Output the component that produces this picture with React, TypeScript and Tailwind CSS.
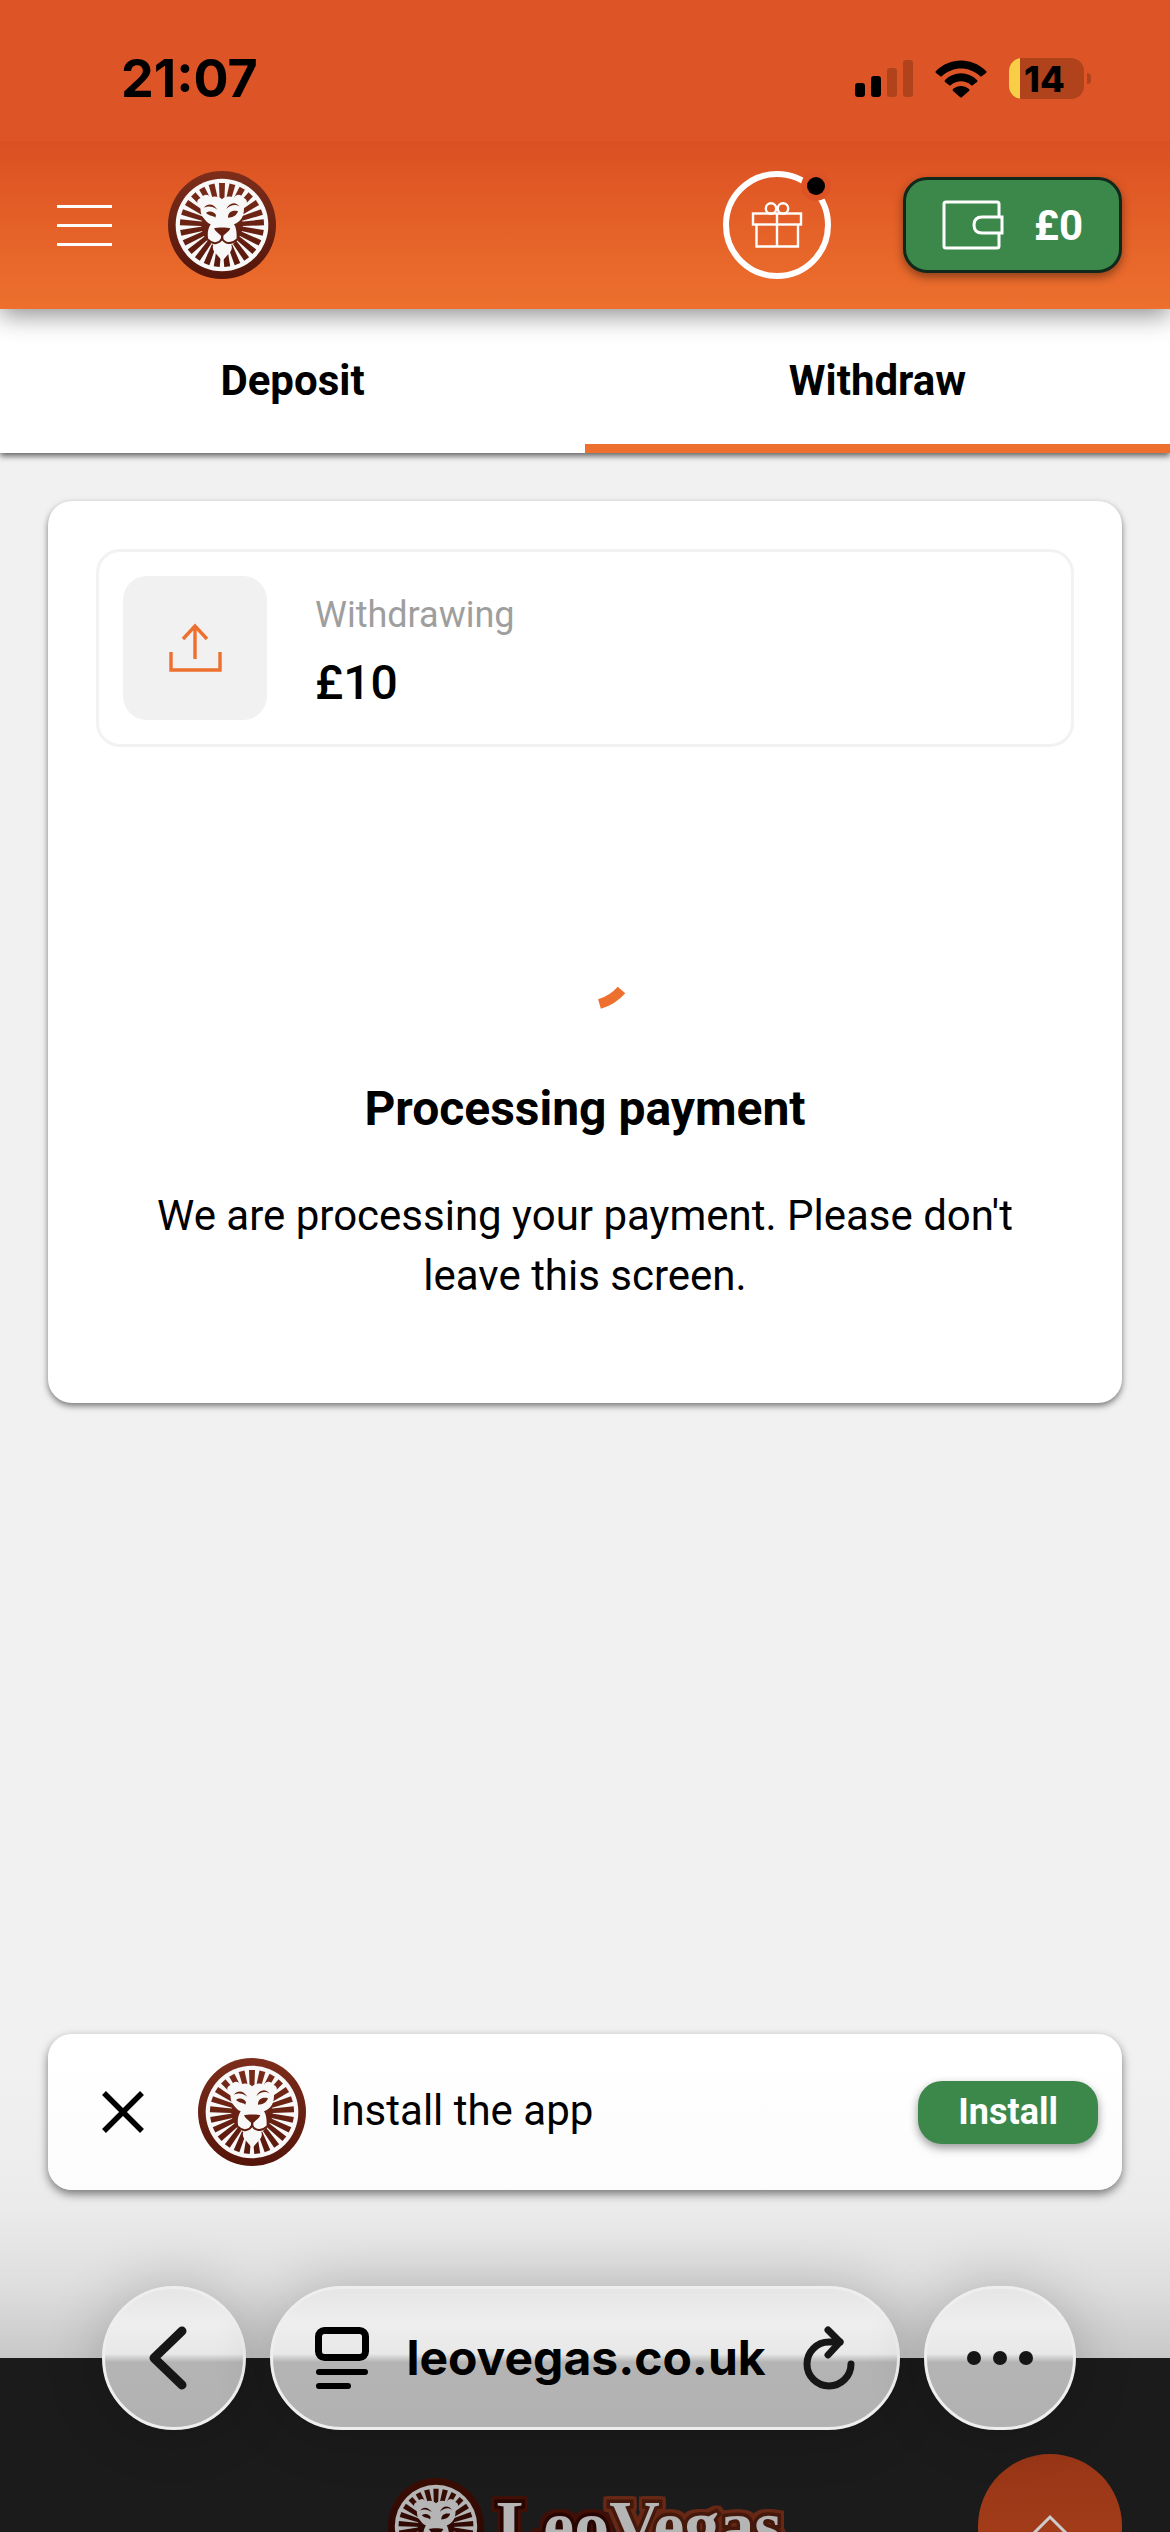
import { useId } from 'react';

const RAY_COUNT = 25;

interface LionLogoProps {
  className?: string;
  top?: string;
  bottom?: string;
  face?: string;
}

function LionLogo({
  className,
  top = '#7d2e1b',
  bottom = '#54150a',
  face = '#f8f8f8'
}: LionLogoProps) {
  const id = useId();
  const fill = `url(#${id})`;

  return (
    <svg viewBox="0 0 324 324" className={className} aria-hidden="true">
      <defs>
        <linearGradient id={id} gradientUnits="userSpaceOnUse" x1="0" y1="0" x2="0" y2="324">
          <stop offset="0" stopColor={top} />
          <stop offset="1" stopColor={bottom} />
        </linearGradient>
        <mask id={`${id}-rays`}>
          {Array.from({ length: RAY_COUNT }, (_, i) => (
            <path
              key={i}
              d="M-9 -126 H9 L6 -40 H-6 Z"
              fill="white"
              transform={`translate(162 162) rotate(${(360 / RAY_COUNT) * i})`}
            />
          ))}
          <circle cx="162" cy="164" r="62" fill="white" />
        </mask>
      </defs>
      <circle cx="162" cy="162" r="162" fill={fill} />
      <circle cx="162" cy="162" r="139" fill={face} />
      <rect width="324" height="324" fill={fill} mask={`url(#${id}-rays)`} />
      <g transform="translate(-24 -18)">
        <path
          fill={face}
          d="M186 103 C178 94 162 92 152 98 C146 86 130 86 126 98 C110 100 106 116 121 124 C122 140 122 150 130 158 C138 168 142 174 152 178 C144 190 142 205 144 218 C148 232 156 238 160 240 C156 250 160 258 168 266 L187 288 L206 266 C214 258 218 250 214 240 C222 236 230 228 230 214 C230 200 228 186 222 178 C232 174 240 168 246 158 C252 148 252 134 252 124 C266 116 262 100 248 98 C244 86 228 86 222 98 C210 92 194 94 186 103 Z"
        />
        <g fill={fill}>
          <path d="M162 190 C170 187 202 187 211 190 C208 199 196 206 190 212 V222 H183 V212 C176 206 166 199 162 190 Z" />
          <path d="M138 144 C148 136 162 139 168 150 L166 158 C162 152 148 154 138 144 Z" />
          <path d="M204 158 C203 142 218 134 234 139 C230 152 218 158 204 158 Z" />
          <path d="M132 128 C142 114 160 114 172 134 C158 124 146 122 132 128 Z" />
          <path d="M199 132 C208 112 228 108 240 126 C228 116 212 120 199 132 Z" />
        </g>
        <path
          fill="none"
          stroke={fill}
          strokeWidth="6"
          d="M144 224 C160 242 180 234 186 220 C194 236 214 240 230 224"
        />
      </g>
    </svg>
  );
}

function StatusBar() {
  return (
    <div className="flex h-[141px] items-center justify-between bg-[#dd5426] pt-4 pr-[79px] pl-[121px] text-black">
      <time className="font-['Inter'] text-[52px] leading-none font-bold">21:07</time>
      <div className="flex items-center gap-[22px]">
        <svg viewBox="0 0 58 38" className="h-[38px] w-[58px]" aria-hidden="true">
          <rect y="23" width="10" height="14" rx="3" />
          <rect x="16" y="16" width="10" height="21" rx="3" />
          <rect x="32" y="8" width="10" height="29" rx="3" fill="#b0421c" />
          <rect x="48" width="10" height="37" rx="3" fill="#b0421c" />
        </svg>
        <svg viewBox="0 0 52 38" className="h-[38px] w-[52px]" aria-hidden="true">
          <path d="M1 11 C15 -3 37 -3 51 11 Q52 12 51 13 L47 16 Q46 17 45 16 C34 6 18 6 7 16 Q6 17 5 16 L1 13 Q0 12 1 11 Z" />
          <path d="M10 20 C19 11 33 11 42 20 Q43 21 42 22 L38 25 Q37 26 36 25 C30 20 22 20 16 25 Q15 26 14 25 L10 22 Q9 21 10 20 Z" />
          <path d="M18 29 C23 25 29 25 34 29 Q35 30 34 31 L27 37 Q26 38 25 37 L18 31 Q17 30 18 29 Z" />
        </svg>
        <div className="flex items-center gap-[3px]">
          <div className="flex h-[41px] w-[75px] items-center overflow-hidden rounded-[13px] bg-[#b0421c]">
            <span className="h-full w-[11px] bg-[#f7ce46]" />
            <span className="pl-1 font-['Inter'] text-4xl leading-none font-extrabold">14</span>
          </div>
          <span className="h-[11px] w-1 rounded-r-full bg-[#b0421c]" />
        </div>
      </div>
    </div>
  );
}

function Header() {
  return (
    <header className="relative z-20 shadow-[0_6px_24px_rgba(0,0,0,0.45)]">
      <StatusBar />
      <div className="flex h-[168px] items-center bg-linear-to-b from-[#db5022] to-[#ed702e] px-12">
        <button type="button" aria-label="Menu" className="flex w-[72px] flex-col items-center gap-4">
          <span className="h-[3px] w-[55px] bg-white" />
          <span className="h-[3px] w-[55px] bg-white" />
          <span className="h-[3px] w-[55px] bg-white" />
        </button>
        <a href="#home" aria-label="Home" className="ml-12">
          <LionLogo className="size-[108px]" />
        </a>
        <button type="button" aria-label="Promotions" className="mr-[72px] ml-auto">
          <svg viewBox="0 0 108 108" className="size-[108px]" fill="none" stroke="white">
            <circle cx="54" cy="54" r="51" strokeWidth="6" />
            <circle cx="93" cy="15" r="15" fill="#dd5325" stroke="none" />
            <circle cx="93" cy="15" r="9" fill="black" stroke="none" />
            <g strokeWidth="2.4">
              <rect x="30" y="42.5" width="48" height="11" />
              <path d="M33.5 53.5 V75.5 H75 V53.5 M54 42 V75" />
              <circle cx="48" cy="37.5" r="5.2" />
              <circle cx="60" cy="37.5" r="5.2" />
            </g>
          </svg>
        </button>
        <button
          type="button"
          className="flex h-24 items-center gap-[30px] rounded-3xl border-3 border-[#10291a] bg-[#3c884b] px-9 text-[42px] font-bold text-white shadow-[0_4px_10px_rgba(0,0,0,0.4)]"
        >
          <svg viewBox="0 0 62 50" className="h-[50px] w-[62px]" fill="none" stroke="white" strokeWidth="3" aria-hidden="true">
            <path d="M57 16 V4 Q57 2 55 2 H4 Q2 2 2 4 V46 Q2 48 4 48 H55 Q57 48 57 46 V33" />
            <path d="M60 17 H40 Q32 17 32 25 Q32 33 40 33 H60 Z" />
          </svg>
          £0
        </button>
      </div>
    </header>
  );
}

function Tabs() {
  return (
    <nav className="relative z-10 flex h-36 bg-white text-[42px] font-bold shadow-[0_3px_6px_rgba(0,0,0,0.6)]">
      <button type="button" className="flex-1 border-b-9 border-transparent pt-2">
        Deposit
      </button>
      <button type="button" aria-current="page" className="flex-1 border-b-9 border-[#ed702e] pt-2">
        Withdraw
      </button>
    </nav>
  );
}

function PaymentCard() {
  return (
    <section className="rounded-3xl bg-white p-12 pb-[97px] shadow-[0_3px_6px_rgba(0,0,0,0.5)]">
      <div className="flex items-center gap-12 rounded-3xl border-3 border-[#f2f2f2] p-6">
        <div className="flex size-36 items-center justify-center rounded-3xl bg-[#f1f1f1]">
          <svg viewBox="0 0 54 50" className="h-[50px] w-[54px]" fill="none" stroke="#ed702e" strokeWidth="3.4" aria-hidden="true">
            <path d="M3 29 V47 H52 V29" />
            <path d="M27 36 V3 M15 16 L27 3 L39 16" />
          </svg>
        </div>
        <div className="pt-2">
          <p className="text-4xl leading-[54px] text-[#9e9e9e]">Withdrawing</p>
          <p className="pt-2 text-5xl leading-[66px] font-medium">£10</p>
        </div>
      </div>

      <div className="flex flex-col items-center pt-[154px] text-center" role="status">
        <svg viewBox="0 0 120 120" className="size-[120px]" fill="none" aria-hidden="true">
          <path d="M74.5 103 A46.500 46.500 0 0 0 96.500 89" stroke="#ed702e" strokeWidth="10" />
        </svg>
        <h1 className="pt-13 text-5xl leading-[72px] font-bold">Processing payment</h1>
        <p className="px-6 pt-[41px] text-[42px] leading-[60px]">
          We are processing your payment. Please don't leave this screen.
        </p>
      </div>
    </section>
  );
}

function InstallBanner() {
  return (
    <aside className="flex h-39 items-center rounded-3xl bg-linear-to-b from-white to-[#fcfcfc] pr-6 pl-12 shadow-[0_4px_10px_rgba(0,0,0,0.5)]">
      <button type="button" aria-label="Close">
        <svg viewBox="0 0 54 54" className="size-[54px]" stroke="black" strokeWidth="5.500">
          <path d="M8 8 L46 46 M46 8 L8 46" />
        </svg>
      </button>
      <LionLogo className="ml-12 size-[108px]" />
      <p className="flex-1 pb-1 pl-6 text-[42px]">Install the app</p>
      <button
        type="button"
        className="h-[63px] rounded-3xl bg-[#3c884b] px-10 text-4xl font-bold text-white shadow-[0_4px_10px_rgba(0,0,0,0.4)]"
      >
        Install
      </button>
    </aside>
  );
}

function Footer() {
  return (
    <footer className="relative flex h-[174px] shrink-0 justify-center overflow-hidden bg-[#1b1b1b] pt-[120px]">
      <a href="#home" className="flex items-start gap-3">
        <LionLogo className="size-24" top="#3b0d04" bottom="#240502" face="#b5b5b5" />
        <span className="font-['Liberation_Serif'] text-[70px] leading-[96px] font-bold text-[#b5b5b5] [paint-order:stroke_fill]">
          <span className="inline-block [-webkit-text-stroke:7px_#260502] [filter:drop-shadow(3px_0_#400f06)_drop-shadow(-3px_0_#400f06)_drop-shadow(0_3px_#400f06)_drop-shadow(0_-3px_#400f06)]">
            Leo
          </span>
          <span className="inline-block [-webkit-text-stroke:7px_#45180c] [filter:drop-shadow(3px_0_#682816)_drop-shadow(-3px_0_#682816)_drop-shadow(0_3px_#682816)_drop-shadow(0_-3px_#682816)]">
            Vegas
          </span>
        </span>
      </a>
      <button
        type="button"
        aria-label="Back to top"
        className="absolute top-24 right-12 flex size-36 items-center justify-center rounded-full bg-linear-to-b from-[#983617] to-[#aa401a]"
      >
        <svg viewBox="0 0 40 24" className="h-6 w-10" fill="none" stroke="#cccccc" strokeWidth="3">
          <path d="M3 20 L20 3 L37 20" />
        </svg>
      </button>
    </footer>
  );
}

const glass =
  'flex h-36 items-center border-3 border-[#eeeeee] bg-[linear-gradient(#e6e6e6,#eeeeee_25%,#e8e8e8_47%,#b4b4b4_53%,#b2b2b2)] shadow-[0_0_60px_rgba(0,0,0,0.2)]';

function BrowserBar() {
  return (
    <div className="absolute inset-x-0 bottom-[102px] flex gap-6 pr-[94px] pl-[102px]">
      <button type="button" aria-label="Back" className={`${glass} w-36 justify-center rounded-full`}>
        <svg viewBox="0 0 38 64" className="mr-3 h-16 w-[38px]" fill="none" stroke="#161616" strokeWidth="9" strokeLinecap="round" strokeLinejoin="round">
          <path d="M33 5 L5 32 L33 59" />
        </svg>
      </button>
      <div className={`${glass} flex-1 justify-between rounded-[72px] px-[42px]`}>
        <button type="button" aria-label="Page menu">
          <svg viewBox="0 0 54 64" className="h-16 w-[54px]" fill="none" stroke="black" strokeWidth="7" strokeLinecap="round">
            <rect x="3.500" y="4.500" width="47" height="27" rx="6" />
            <path d="M4 46 H50 M4 60 H33" strokeWidth="6" />
          </svg>
        </button>
        <span className="font-['Inter'] text-5xl leading-none font-bold">leovegas.co.uk</span>
        <button type="button" aria-label="Reload">
          <svg viewBox="0 0 52 64" className="h-16 w-[52px]" fill="none" stroke="#161616" strokeWidth="7" strokeLinecap="round" strokeLinejoin="round">
            <path d="M37 16 H26 A22 22 0 1 0 48 38" />
            <path d="M25 4 L37 16 L25 29" />
          </svg>
        </button>
      </div>
      <button type="button" aria-label="More" className={`${glass} w-[152px] justify-center gap-3 rounded-[72px]`}>
        <span className="size-[14px] rounded-full bg-[#161616]" />
        <span className="size-[14px] rounded-full bg-[#161616]" />
        <span className="size-[14px] rounded-full bg-[#161616]" />
      </button>
    </div>
  );
}

export default function App() {
  return (
    <div className="relative flex h-screen flex-col overflow-hidden bg-[#f1f1f1] font-['Roboto',sans-serif] text-black">
      <Header />
      <Tabs />
      <main className="flex flex-1 flex-col justify-between bg-[linear-gradient(to_top,#c8c8c8,#dedede_72px,#ebebeb_150px,#f1f1f1_300px)] px-12 pt-12 pb-[168px]">
        <PaymentCard />
        <InstallBanner />
      </main>
      <Footer />
      <BrowserBar />
    </div>
  );
}
